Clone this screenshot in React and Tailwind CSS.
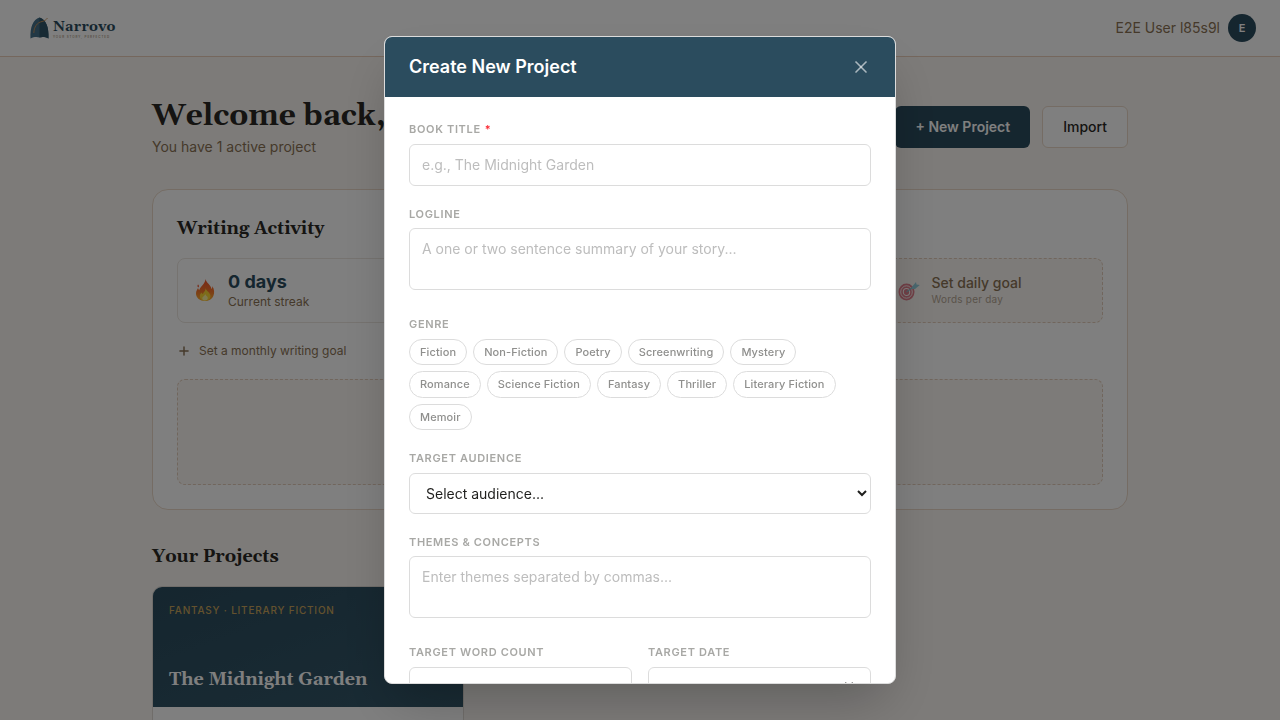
import React, { useState } from 'react';
import { Plus, X } from 'lucide-react';

const GENRES = [
  'Fiction', 'Non-Fiction', 'Poetry', 'Screenwriting', 'Mystery', 'Romance',
  'Science Fiction', 'Fantasy', 'Thriller', 'Literary Fiction', 'Memoir',
];

const AUDIENCES = ['Children', 'Middle Grade', 'Young Adult', 'Adult'];

const LABEL = 'block mb-1.5 text-[11px] leading-normal font-semibold tracking-[0.06em] uppercase text-[#a8a8a5]';
const FIELD = 'w-full rounded-md border border-[#dcdcdc] bg-white text-sm text-[#1f1f1d] placeholder:text-[#bdbdbd] focus:outline-none';
const SERIF = 'font-[Georgia,Gelasio,"Liberation_Serif",serif] font-bold text-[#2a2824]';

function Logo() {
  return (
    <a href="#home" className="flex items-center gap-1 pl-1.5" aria-label="Narrovo home">
      <svg width="19" height="22" viewBox="0 0 19 22" aria-hidden="true">
        <path d="M0.5 21.5C0 10 3 2.5 9.5 0.5C16 2.5 19 10 18.5 21.5C15 19.6 12 19.6 9.5 20.4C7 19.6 4 19.6 0.5 21.5Z" fill="#44708a" />
        <path d="M9.5 0.5C16 2.5 19 10 18.5 21.5C15 19.6 12 19.6 9.5 20.4Z" fill="#2f5468" />
        <path d="M3.8 16C4 10 7 5.5 12 4.5C14.5 4 16 3 17.5 1" fill="none" stroke="#c8935a" strokeWidth="0.9" />
      </svg>
      <span className="flex flex-col pt-0.5">
        <span className="font-[Georgia,Gelasio,'Liberation_Serif',serif] text-[14px] leading-4 font-bold tracking-wide text-[#2b4c5e]">Narrovo</span>
        <span className="text-[3px] leading-1 tracking-[0.3em] text-[#8b7355]">YOUR STORY, PERFECTED</span>
      </span>
    </a>
  );
}

function FlameIcon() {
  return (
    <svg width="22" height="24" viewBox="0 0 22 24" aria-hidden="true">
      <defs>
        <linearGradient id="flame" x1="0" y1="0" x2="0" y2="1">
          <stop offset="0" stopColor="#f0502a" />
          <stop offset="0.55" stopColor="#f9762a" />
          <stop offset="1" stopColor="#fbb12d" />
        </linearGradient>
      </defs>
      <path d="M11.5 1C12 4.5 17 7 17.5 11C18.3 10.3 18.4 9 18.2 8C20.5 11 20.5 15 19.5 17.5C18 21.5 14.5 23 11 23C6 23 2 20 2 15.5C2 13 3.2 11.5 4 10C4.4 11 4.6 11.8 5.2 12.3C6 8.5 11 6.5 11.5 1Z" fill="url(#flame)" />
      <path d="M4 6.5C5 7.2 5.2 8.5 4.4 9.6C3.3 9 3.2 7.5 4 6.5Z" fill="#f0502a" />
      <path d="M11.5 10C12 13 16.5 14.5 16.5 18C16.5 21 14 22.5 11 22.5C8 22.5 5.8 21 5.8 18.2C5.8 16.5 6.8 15.5 7.5 14.5C8 15.5 8.5 16 9 16C9.5 14 11.8 13 11.5 10Z" fill="#fdd835" />
      <path d="M11.2 16C11.5 17.5 13.8 18.2 13.8 20C13.8 21.7 12.6 22.5 11 22.5C9.5 22.5 8.3 21.7 8.3 20.2C8.3 18.5 11 18.2 11.2 16Z" fill="#fff59d" />
    </svg>
  );
}

function TargetIcon() {
  return (
    <svg width="22" height="22" viewBox="0 0 22 22" className="opacity-60" aria-hidden="true">
      <ellipse cx="8.5" cy="12" rx="8" ry="8.5" fill="#d3304a" />
      <ellipse cx="8.5" cy="12" rx="5.8" ry="6.2" fill="none" stroke="#fff" strokeWidth="0.9" />
      <ellipse cx="8.5" cy="12" rx="3.2" ry="3.5" fill="none" stroke="#fff" strokeWidth="1.1" />
      <path d="M8.5 12L18 5" stroke="#4a8fa8" strokeWidth="1.3" />
      <path d="M13.5 7.500L18 2L18.5 4.5L21.8 5L17 9L13.8 9Z" fill="#4fb3cf" />
    </svg>
  );
}

function Header() {
  return (
    <header className="flex h-[57px] items-center justify-between border-b border-[#ebcfba] bg-white px-6">
      <Logo />
      <div className="flex items-center gap-2">
        <span className="text-sm text-[#8b7355]">E2E User l85s9l</span>
        <span className="flex size-7 items-center justify-center rounded-full bg-[#2b4c5e] text-[11px] font-semibold text-white">E</span>
      </div>
    </header>
  );
}

function WritingActivity() {
  return (
    <section className="mt-8 rounded-2xl border border-[#ebd9c9] bg-white p-6">
      <h2 className={`${SERIF} text-lg leading-[30px]`}>Writing Activity</h2>
      <div className="mt-3.5 grid grid-cols-4 gap-3">
        <div className="flex h-[65px] items-center gap-3 rounded-lg border border-[#ece7e1] px-4 pb-0.5">
          <FlameIcon />
          <div>
            <div className="text-lg leading-6 font-bold text-[#2b4c5e]">0 days</div>
            <div className="text-xs text-[#8b7355]">Current streak</div>
          </div>
        </div>
        <button type="button" className="col-start-4 flex h-[65px] items-center gap-3 rounded-lg border border-dashed border-[#e3cdbb] bg-[#faf7f3] px-4 text-left">
          <TargetIcon />
          <span className="pb-1">
            <span className="block text-sm font-medium text-[#8b7355]">Set daily goal</span>
            <span className="block text-[10px] leading-3 tracking-[0.02em] text-[#b5a693]">Words per day</span>
          </span>
        </button>
      </div>
      <button type="button" className="mt-4 flex h-6 items-center gap-2 text-xs text-[#8b7355]">
        <Plus size={14} strokeWidth={2.5} />
        Set a monthly writing goal
      </button>
      <div className="mt-4 h-[106px] rounded-lg border border-dashed border-[#e3cdbb] bg-[#faf7f3]" />
    </section>
  );
}

function ProjectCard({ title, genres }) {
  return (
    <article className="overflow-hidden rounded-[10px] border border-[#e0dbd5] bg-white">
      <div className="flex h-[120px] flex-col justify-between bg-linear-160 from-[#2b4c5e] to-[#34586a] p-4">
        <div className="text-[10px] leading-3.5 font-medium tracking-[0.08em] text-[#c9a55c] uppercase">{genres.join(' · ')}</div>
        <h3 className="font-[Georgia,Gelasio,'Liberation_Serif',serif] text-lg leading-[22px] font-bold text-white">{title}</h3>
      </div>
      <div className="h-24 p-4" />
    </article>
  );
}

function Field({ id, label, required, children }) {
  return (
    <div>
      <label htmlFor={id} className={LABEL}>
        {label}
        {required && <span className="ml-1 text-red-500">*</span>}
      </label>
      {children}
    </div>
  );
}

function NewProjectModal({ onClose }) {
  const [picked, setPicked] = useState([]);

  const toggle = (genre) =>
    setPicked(picked.includes(genre) ? picked.filter(g => g !== genre) : [...picked, genre]);

  return (
    <div className="fixed inset-0 flex items-center justify-center bg-black/50 p-4">
      <div role="dialog" aria-labelledby="modal-title" className="flex max-h-[90vh] w-full max-w-lg flex-col overflow-hidden rounded-lg border border-[#dcdcdc] bg-white shadow-2xl">
        <div className="flex h-[60px] shrink-0 items-center justify-between bg-[#2b4c5e] px-6">
          <h2 id="modal-title" className="text-lg font-semibold text-white">Create New Project</h2>
          <button type="button" onClick={onClose} aria-label="Close" className="flex size-5 items-center justify-center text-white/60">
            <X size={20} strokeWidth={2} />
          </button>
        </div>

        <form className="flex flex-col gap-5 overflow-y-auto p-6 [scrollbar-width:none]">
          <Field id="title" label="Book Title" required>
            <input id="title" type="text" placeholder="e.g., The Midnight Garden" className={`${FIELD} block px-3 py-2.5`} />
          </Field>

          <Field id="logline" label="Logline">
            <textarea id="logline" rows={2} placeholder="A one or two sentence summary of your story..." className={`${FIELD} resize-none px-3 py-2.5`} />
          </Field>

          {/* Genre chips */}
          <fieldset>
            <legend className={LABEL}>Genre</legend>
            <div className="flex flex-wrap gap-1.5">
              {GENRES.map(g => (
                <button
                  key={g} type="button"
                  onClick={() => toggle(g)}
                  className={`rounded-full border px-2.5 py-1 text-[11px] leading-normal font-medium tracking-[0.01em] ${
                    picked.includes(g)
                      ? 'border-[#2b4c5e] bg-[#2b4c5e] text-white'
                      : 'border-[#dcdcdc] bg-white text-[#8f8f8d]'
                  }`}
                >
                  {g}
                </button>
              ))}
            </div>
          </fieldset>

          <Field id="audience" label="Target Audience">
            <select id="audience" defaultValue="" className={`${FIELD} block h-[41px] px-3`}>
              <option value="">Select audience...</option>
              {AUDIENCES.map(a => <option key={a}>{a}</option>)}
            </select>
          </Field>

          <Field id="themes" label="Themes &amp; Concepts">
            <textarea id="themes" rows={2} placeholder="Enter themes separated by commas..." className={`${FIELD} resize-none px-3 py-2.5`} />
          </Field>

          <div className="grid grid-cols-2 gap-4">
            <Field id="words" label="Target Word Count">
              <input id="words" type="text" placeholder="e.g., 80000" className={`${FIELD} block h-11 px-3`} />
            </Field>
            <Field id="date" label="Target Date">
              <input id="date" type="date" className={`${FIELD} block h-11 px-3`} />
            </Field>
          </div>
        </form>
      </div>
    </div>
  );
}

export default function App() {
  const [open, setOpen] = useState(true);

  return (
    <div className="min-h-screen bg-[#faf7f3] font-[Inter,sans-serif]">
      <Header />
      <main className="mx-auto max-w-5xl px-6 py-10">
        <div className="flex items-center justify-between">
          <div>
            <h1 className={`${SERIF} text-[30px] leading-[38px]`}>Welcome back,</h1>
            <p className="mt-0.5 text-sm text-[#8b7355]">You have 1 active project</p>
          </div>
          <div className="flex gap-3">
            <button type="button" onClick={() => setOpen(true)} className="h-[42px] rounded-md bg-[#2b4c5e] px-5 text-sm font-semibold text-white">
              + New Project
            </button>
            <button type="button" className="h-[42px] rounded-md border border-[#ebd9c9] bg-white px-5 text-sm font-medium text-[#2a2824]">
              Import
            </button>
          </div>
        </div>

        <WritingActivity />

        <h2 className={`${SERIF} mt-8 text-lg leading-[30px]`}>Your Projects</h2>
        <div className="mt-3.5 grid grid-cols-3 gap-5">
          <ProjectCard title="The Midnight Garden" genres={['Fantasy', 'Literary Fiction']} />
        </div>
      </main>

      {open && <NewProjectModal onClose={() => setOpen(false)} />}
    </div>
  );
}
